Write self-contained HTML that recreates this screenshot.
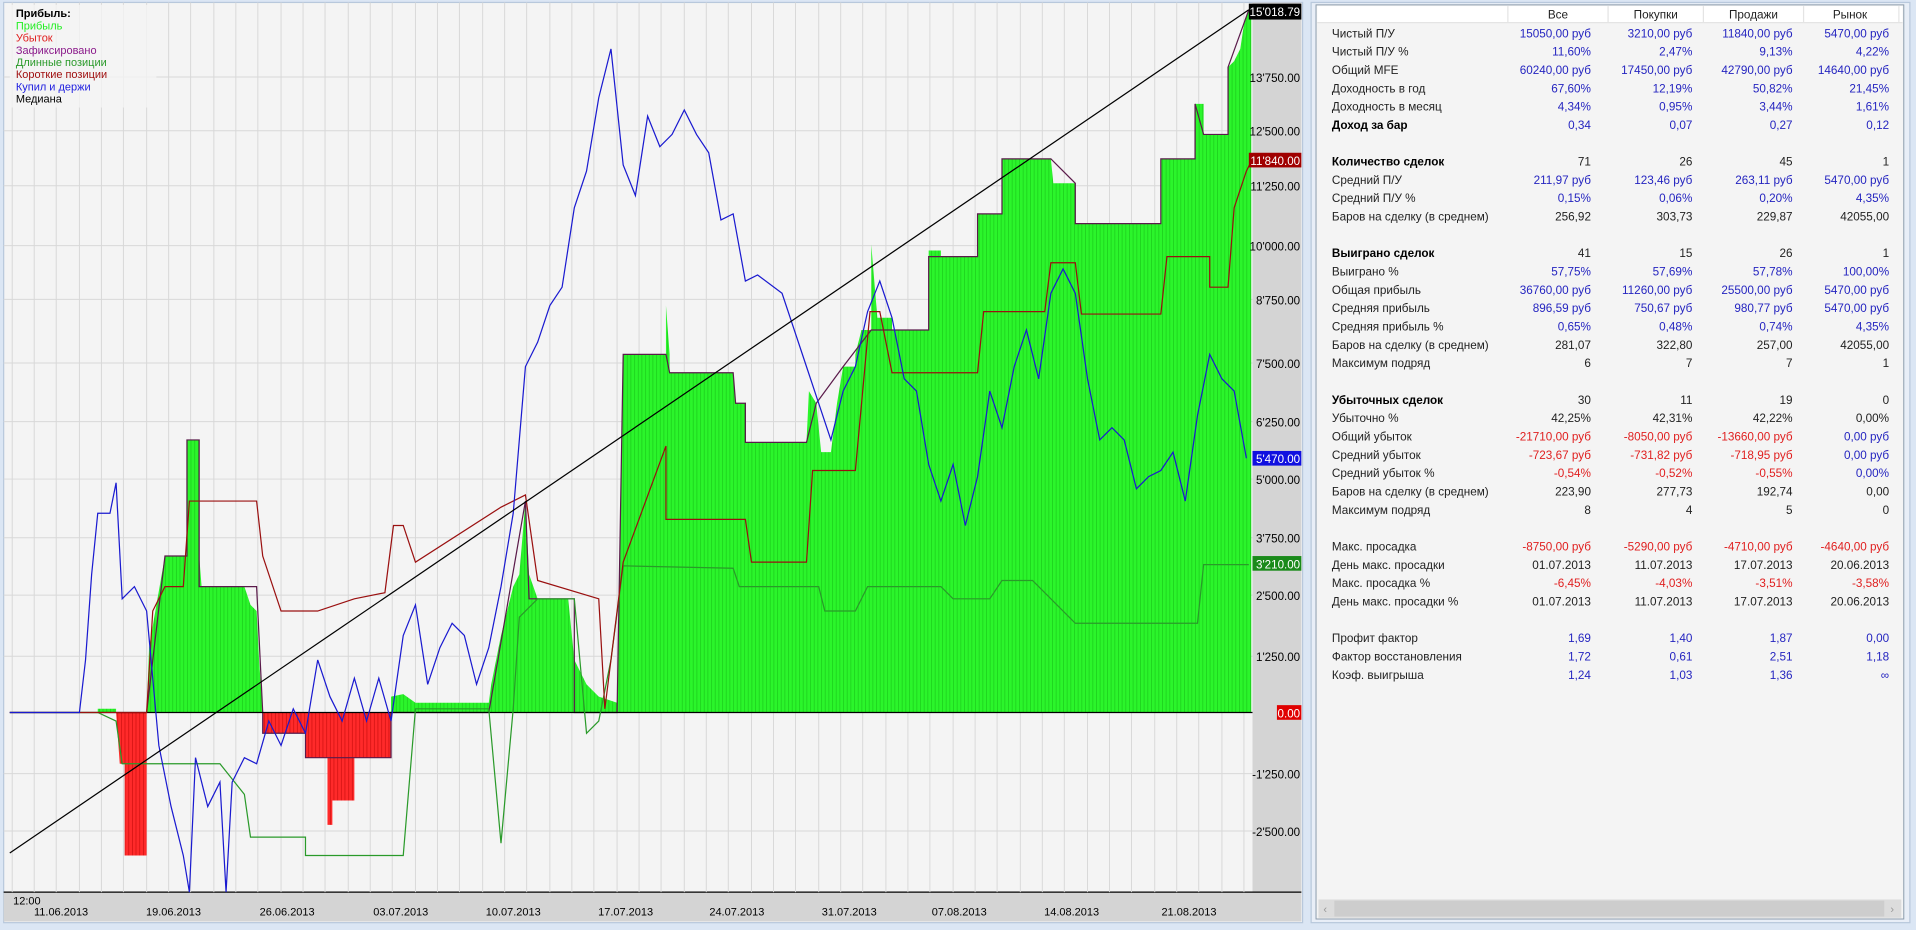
<!DOCTYPE html>
<html><head><meta charset="utf-8"><style>
html,body{margin:0;padding:0;background:#dbe6f4;}
svg{display:block}
text{font-family:"Liberation Sans","DejaVu Sans",sans-serif;}
</style></head><body>
<svg width="1916" height="930" viewBox="0 0 1568 761" preserveAspectRatio="none" xmlns="http://www.w3.org/2000/svg">
<defs>
<pattern id="gs" width="3" height="10" patternUnits="userSpaceOnUse"><rect width="3" height="10" fill="#2bf52b"/><rect width="0.6" height="10" fill="#1ccc1c"/></pattern>
<pattern id="rs" width="3" height="10" patternUnits="userSpaceOnUse"><rect width="3" height="10" fill="#ff2a2a"/><rect width="0.6" height="10" fill="#d01010"/></pattern>
</defs>
<rect width="1568" height="761" fill="#dbe6f4"/>
<rect x="3" y="2" width="1063" height="753" fill="#f4f4f4" stroke="#b8c8dc"/>
<rect x="1025" y="2" width="40" height="728" fill="#d4d4d4"/>
<rect x="3" y="730" width="1062" height="24" fill="#d4d4d4"/>
<line x1="3" y1="730" x2="1065" y2="730" stroke="#000" stroke-width="1"/>
<g stroke="#d8d8d8" stroke-width="0.8">
<line x1="10" y1="2" x2="10" y2="730"/><line x1="28" y1="2" x2="28" y2="730"/><line x1="46" y1="2" x2="46" y2="730"/><line x1="65" y1="2" x2="65" y2="730"/><line x1="83" y1="2" x2="83" y2="730"/><line x1="101" y1="2" x2="101" y2="730"/><line x1="120" y1="2" x2="120" y2="730"/><line x1="138" y1="2" x2="138" y2="730"/><line x1="156" y1="2" x2="156" y2="730"/><line x1="175" y1="2" x2="175" y2="730"/><line x1="193" y1="2" x2="193" y2="730"/><line x1="211" y1="2" x2="211" y2="730"/><line x1="230" y1="2" x2="230" y2="730"/><line x1="248" y1="2" x2="248" y2="730"/><line x1="266" y1="2" x2="266" y2="730"/><line x1="285" y1="2" x2="285" y2="730"/><line x1="303" y1="2" x2="303" y2="730"/><line x1="321" y1="2" x2="321" y2="730"/><line x1="340" y1="2" x2="340" y2="730"/><line x1="358" y1="2" x2="358" y2="730"/><line x1="376" y1="2" x2="376" y2="730"/><line x1="395" y1="2" x2="395" y2="730"/><line x1="413" y1="2" x2="413" y2="730"/><line x1="431" y1="2" x2="431" y2="730"/><line x1="450" y1="2" x2="450" y2="730"/><line x1="468" y1="2" x2="468" y2="730"/><line x1="486" y1="2" x2="486" y2="730"/><line x1="505" y1="2" x2="505" y2="730"/><line x1="523" y1="2" x2="523" y2="730"/><line x1="541" y1="2" x2="541" y2="730"/><line x1="560" y1="2" x2="560" y2="730"/><line x1="578" y1="2" x2="578" y2="730"/><line x1="596" y1="2" x2="596" y2="730"/><line x1="615" y1="2" x2="615" y2="730"/><line x1="633" y1="2" x2="633" y2="730"/><line x1="651" y1="2" x2="651" y2="730"/><line x1="670" y1="2" x2="670" y2="730"/><line x1="688" y1="2" x2="688" y2="730"/><line x1="706" y1="2" x2="706" y2="730"/><line x1="725" y1="2" x2="725" y2="730"/><line x1="743" y1="2" x2="743" y2="730"/><line x1="761" y1="2" x2="761" y2="730"/><line x1="780" y1="2" x2="780" y2="730"/><line x1="798" y1="2" x2="798" y2="730"/><line x1="816" y1="2" x2="816" y2="730"/><line x1="835" y1="2" x2="835" y2="730"/><line x1="853" y1="2" x2="853" y2="730"/><line x1="871" y1="2" x2="871" y2="730"/><line x1="890" y1="2" x2="890" y2="730"/><line x1="908" y1="2" x2="908" y2="730"/><line x1="926" y1="2" x2="926" y2="730"/><line x1="945" y1="2" x2="945" y2="730"/><line x1="963" y1="2" x2="963" y2="730"/><line x1="981" y1="2" x2="981" y2="730"/><line x1="1000" y1="2" x2="1000" y2="730"/><line x1="1018" y1="2" x2="1018" y2="730"/>
<line x1="3" y1="63" x2="1025" y2="63"/><line x1="3" y1="107" x2="1025" y2="107"/><line x1="3" y1="152" x2="1025" y2="152"/><line x1="3" y1="201" x2="1025" y2="201"/><line x1="3" y1="245" x2="1025" y2="245"/><line x1="3" y1="297" x2="1025" y2="297"/><line x1="3" y1="345" x2="1025" y2="345"/><line x1="3" y1="392" x2="1025" y2="392"/><line x1="3" y1="440" x2="1025" y2="440"/><line x1="3" y1="487" x2="1025" y2="487"/><line x1="3" y1="537" x2="1025" y2="537"/><line x1="3" y1="633" x2="1025" y2="633"/><line x1="3" y1="680" x2="1025" y2="680"/>
</g>
<polygon fill="url(#gs)" points="80,583 80,580 95,580 95,583 120,583 122,530 128,495 135,455 153,455 153,360 163,360 163,455 165,480 200,480 205,495 210,500 212,540 215,583 320,583 320,570 330,568 340,575 400,575 402,560 410,520 420,480 425,470 430,410 433,470 440,490 465,490 470,540 480,560 490,570 505,575 510,290 545,290 545,250 548,290 548,305 600,305 602,330 610,330 610,362 660,362 662,320 668,330 672,370 680,370 685,330 690,300 700,300 700,290 705,270 713,270 713,200 718,260 730,260 730,270 760,270 760,205 770,205 770,210 800,210 800,175 820,175 820,130 860,130 862,150 880,150 880,183 950,183 950,130 978,130 978,85 985,85 985,110 1005,110 1005,55 1010,50 1015,40 1018,20 1022,8 1024,8 1024,583"/>
<polygon fill="url(#rs)" points="95,583 98,625 102,625 102,700 120,700 120,583"/>
<polygon fill="url(#rs)" points="215,583 215,600 250,600 250,620 268,620 268,675 272,675 272,655 290,655 290,620 320,620 320,583"/>
<polyline fill="none" stroke="#5a1a4a" stroke-width="1" points="120,583 135,455 153,455 153,360 163,360 163,480 210,480 215,583 215,600 250,600 250,620 290,620 320,620 320,583 400,583 430,410 433,490 470,490 470,583 505,583 510,290 545,290 548,305 600,305 602,330 610,330 610,362 660,362 668,330 690,300 713,270 730,270 760,270 760,210 800,210 800,175 820,175 820,130 860,130 880,150 880,183 950,183 950,130 978,130 978,85 985,110 1005,110 1005,55 1022,8"/>
<line x1="8" y1="583" x2="1025" y2="583" stroke="#000" stroke-width="1"/>
<polyline fill="none" stroke="#2a9a2a" stroke-width="1" points="8,583 80,583 95,590 100,625 180,625 200,650 205,685 250,685 250,700 330,700 340,580 400,580 410,690 420,580 425,505 440,490 470,490 480,600 490,590 500,540 510,463 600,465 605,480 670,480 675,500 700,500 710,480 770,480 780,490 810,490 820,475 845,475 880,510 980,510 985,462 1022,462"/>
<polyline fill="none" stroke="#9a1010" stroke-width="1" points="8,583 120,583 125,500 130,490 135,480 150,480 155,410 210,410 215,455 230,500 260,500 290,490 315,485 322,430 330,430 340,460 410,415 420,410 430,405 440,475 490,490 495,580 500,540 510,460 545,365 545,425 610,425 615,460 660,460 665,385 700,385 712,255 720,255 730,305 800,305 805,255 855,255 860,215 880,215 885,257 950,257 955,210 990,210 990,235 1005,235 1010,170 1020,140 1025,130"/>
<polyline fill="none" stroke="#1a1ad0" stroke-width="1" points="8,583 65,583 70,540 75,470 80,420 90,420 95,395 100,490 110,480 120,500 130,610 140,660 150,700 155,730 160,620 170,660 180,640 185,730 190,640 200,620 210,625 220,590 230,610 240,580 250,600 260,540 270,570 280,590 290,555 300,590 310,555 320,590 330,520 340,495 350,560 360,530 370,510 380,520 390,560 400,530 410,480 420,420 430,300 440,280 450,250 460,235 470,170 480,140 490,80 500,40 510,135 520,160 530,95 540,120 550,110 560,90 570,110 580,125 590,180 600,175 610,230 620,225 640,240 650,270 660,300 670,330 680,360 690,320 700,300 710,255 720,230 730,260 740,310 750,320 760,380 770,410 780,380 790,430 800,390 810,320 820,350 830,300 840,270 850,310 860,240 870,220 880,240 890,310 900,360 910,350 920,360 930,400 940,390 950,385 960,370 970,410 980,340 990,290 1000,310 1010,320 1020,375"/>
<line x1="8" y1="698" x2="1022" y2="8" stroke="#000" stroke-width="1"/>
<rect x="8" y="4" width="120" height="84" fill="#f4f4f4" opacity="0.8"/>
<g font-size="9">
<text x="13" y="14" font-weight="bold" fill="#000">Прибыль:</text>
<text x="13" y="24" fill="#22ee22">Прибыль</text>
<text x="13" y="34" fill="#e02020">Убыток</text>
<text x="13" y="44" fill="#8b1a8b">Зафиксировано</text>
<text x="13" y="54" fill="#2a9a2a">Длинные позиции</text>
<text x="13" y="64" fill="#a01010">Короткие позиции</text>
<text x="13" y="74" fill="#2020e0">Купил и держи</text>
<text x="13" y="84" fill="#000">Медиана</text>
</g>
<g font-size="9.5" fill="#000" text-anchor="end">
<rect x="1022" y="3" width="43" height="13" fill="#000"/><text x="1064" y="13" fill="#fff">15'018.79</text>
<text x="1064" y="67">13'750.00</text>
<text x="1064" y="111">12'500.00</text>
<rect x="1022" y="125" width="43" height="12" fill="#a00000"/><text x="1064" y="135" fill="#fff">11'840.00</text>
<text x="1064" y="156">11'250.00</text>
<text x="1064" y="205">10'000.00</text>
<text x="1064" y="249">8'750.00</text>
<text x="1064" y="301">7'500.00</text>
<text x="1064" y="349">6'250.00</text>
<rect x="1025" y="369" width="40" height="12" fill="#1010e0"/><text x="1064" y="379" fill="#fff">5'470.00</text>
<text x="1064" y="396">5'000.00</text>
<text x="1064" y="444">3'750.00</text>
<rect x="1025" y="455" width="40" height="12" fill="#1a8a1a"/><text x="1064" y="465" fill="#fff">3'210.00</text>
<text x="1064" y="491">2'500.00</text>
<text x="1064" y="541">1'250.00</text>
<rect x="1045" y="577" width="20" height="12" fill="#e00000"/><text x="1064" y="587" fill="#fff">0.00</text>
<text x="1064" y="637">-1'250.00</text>
<text x="1064" y="684">-2'500.00</text>
</g>
<g font-size="9" fill="#000" text-anchor="middle">
<text x="22" y="740">12:00</text>
<text x="50" y="749">11.06.2013</text><text x="142" y="749">19.06.2013</text><text x="235" y="749">26.06.2013</text><text x="328" y="749">03.07.2013</text><text x="420" y="749">10.07.2013</text><text x="512" y="749">17.07.2013</text><text x="603" y="749">24.07.2013</text><text x="695" y="749">31.07.2013</text><text x="785" y="749">07.08.2013</text><text x="877" y="749">14.08.2013</text><text x="973" y="749">21.08.2013</text>
</g>
<rect x="1073" y="2" width="490" height="753" fill="#e8eef7" stroke="#b8c8dc"/>
<rect x="1077" y="4" width="481" height="748" fill="#f4f4f4" stroke="#8a9aaa" stroke-width="0.8"/>
<rect x="1078" y="5" width="479" height="13" fill="#fff"/>
<line x1="1078" y1="18.5" x2="1557" y2="18.5" stroke="#e4e4e4"/>
<g stroke="#e4e4e4"><line x1="1234" y1="5" x2="1234" y2="18"/><line x1="1316" y1="5" x2="1316" y2="18"/><line x1="1394" y1="5" x2="1394" y2="18"/><line x1="1476" y1="5" x2="1476" y2="18"/><line x1="1554" y1="5" x2="1554" y2="18"/></g>
<rect x="1079" y="736" width="477" height="15" fill="#dcdcdc"/>
<rect x="1092" y="737" width="450" height="13" fill="#cdcdcd"/>
<text x="1083" y="747" font-size="9" fill="#999">‹</text><text x="1547" y="747" font-size="9" fill="#999">›</text>
<g font-size="9.6" fill="#222">
<g text-anchor="middle"><text x="1275" y="15">Все</text><text x="1355" y="15">Покупки</text><text x="1435" y="15">Продажи</text><text x="1514" y="15">Рынок</text></g>
<g>
<text x="1090" y="30.5">Чистый П/У</text><text x="1090" y="45.5">Чистый П/У %</text><text x="1090" y="60.5">Общий MFE</text><text x="1090" y="75.5">Доходность в год</text><text x="1090" y="90.5">Доходность в месяц</text><text x="1090" y="105.5" font-weight="bold" fill="#000">Доход за бар</text>
<text x="1090" y="135.5" font-weight="bold" fill="#000">Количество сделок</text><text x="1090" y="150.5">Средний П/У</text><text x="1090" y="165.5">Средний П/У %</text><text x="1090" y="180.5">Баров на сделку (в среднем)</text>
<text x="1090" y="210.5" font-weight="bold" fill="#000">Выиграно сделок</text><text x="1090" y="225.5">Выиграно %</text><text x="1090" y="240.5">Общая прибыль</text><text x="1090" y="255.5">Средняя прибыль</text><text x="1090" y="270.5">Средняя прибыль %</text><text x="1090" y="285.5">Баров на сделку (в среднем)</text><text x="1090" y="300.5">Максимум подряд</text>
<text x="1090" y="330.5" font-weight="bold" fill="#000">Убыточных сделок</text><text x="1090" y="345.5">Убыточно %</text><text x="1090" y="360.5">Общий убыток</text><text x="1090" y="375.5">Средний убыток</text><text x="1090" y="390.5">Средний убыток %</text><text x="1090" y="405.5">Баров на сделку (в среднем)</text><text x="1090" y="420.5">Максимум подряд</text>
<text x="1090" y="450.5">Макс. просадка</text><text x="1090" y="465.5">День макс. просадки</text><text x="1090" y="480.5">Макс. просадка %</text><text x="1090" y="495.5">День макс. просадки %</text>
<text x="1090" y="525.5">Профит фактор</text><text x="1090" y="540.5">Фактор восстановления</text><text x="1090" y="555.5">Коэф. выигрыша</text>
</g>
<g text-anchor="end" fill="#2525c0">
<text x="1302" y="30.5">15050,00 руб</text><text x="1385" y="30.5">3210,00 руб</text><text x="1467" y="30.5">11840,00 руб</text><text x="1546" y="30.5">5470,00 руб</text>
<text x="1302" y="45.5">11,60%</text><text x="1385" y="45.5">2,47%</text><text x="1467" y="45.5">9,13%</text><text x="1546" y="45.5">4,22%</text>
<text x="1302" y="60.5">60240,00 руб</text><text x="1385" y="60.5">17450,00 руб</text><text x="1467" y="60.5">42790,00 руб</text><text x="1546" y="60.5">14640,00 руб</text>
<text x="1302" y="75.5">67,60%</text><text x="1385" y="75.5">12,19%</text><text x="1467" y="75.5">50,82%</text><text x="1546" y="75.5">21,45%</text>
<text x="1302" y="90.5">4,34%</text><text x="1385" y="90.5">0,95%</text><text x="1467" y="90.5">3,44%</text><text x="1546" y="90.5">1,61%</text>
<text x="1302" y="105.5">0,34</text><text x="1385" y="105.5">0,07</text><text x="1467" y="105.5">0,27</text><text x="1546" y="105.5">0,12</text>
<text x="1302" y="150.5">211,97 руб</text><text x="1385" y="150.5">123,46 руб</text><text x="1467" y="150.5">263,11 руб</text><text x="1546" y="150.5">5470,00 руб</text>
<text x="1302" y="165.5">0,15%</text><text x="1385" y="165.5">0,06%</text><text x="1467" y="165.5">0,20%</text><text x="1546" y="165.5">4,35%</text>
<text x="1302" y="225.5">57,75%</text><text x="1385" y="225.5">57,69%</text><text x="1467" y="225.5">57,78%</text><text x="1546" y="225.5">100,00%</text>
<text x="1302" y="240.5">36760,00 руб</text><text x="1385" y="240.5">11260,00 руб</text><text x="1467" y="240.5">25500,00 руб</text><text x="1546" y="240.5">5470,00 руб</text>
<text x="1302" y="255.5">896,59 руб</text><text x="1385" y="255.5">750,67 руб</text><text x="1467" y="255.5">980,77 руб</text><text x="1546" y="255.5">5470,00 руб</text>
<text x="1302" y="270.5">0,65%</text><text x="1385" y="270.5">0,48%</text><text x="1467" y="270.5">0,74%</text><text x="1546" y="270.5">4,35%</text>
<text x="1546" y="360.5">0,00 руб</text><text x="1546" y="375.5">0,00 руб</text><text x="1546" y="390.5">0,00%</text>
<text x="1302" y="525.5">1,69</text><text x="1385" y="525.5">1,40</text><text x="1467" y="525.5">1,87</text><text x="1546" y="525.5">0,00</text>
<text x="1302" y="540.5">1,72</text><text x="1385" y="540.5">0,61</text><text x="1467" y="540.5">2,51</text><text x="1546" y="540.5">1,18</text>
<text x="1302" y="555.5">1,24</text><text x="1385" y="555.5">1,03</text><text x="1467" y="555.5">1,36</text><text x="1546" y="555.5">∞</text>
</g>
<g text-anchor="end" fill="#222">
<text x="1302" y="135.5">71</text><text x="1385" y="135.5">26</text><text x="1467" y="135.5">45</text><text x="1546" y="135.5">1</text>
<text x="1302" y="180.5">256,92</text><text x="1385" y="180.5">303,73</text><text x="1467" y="180.5">229,87</text><text x="1546" y="180.5">42055,00</text>
<text x="1302" y="210.5">41</text><text x="1385" y="210.5">15</text><text x="1467" y="210.5">26</text><text x="1546" y="210.5">1</text>
<text x="1302" y="285.5">281,07</text><text x="1385" y="285.5">322,80</text><text x="1467" y="285.5">257,00</text><text x="1546" y="285.5">42055,00</text>
<text x="1302" y="300.5">6</text><text x="1385" y="300.5">7</text><text x="1467" y="300.5">7</text><text x="1546" y="300.5">1</text>
<text x="1302" y="330.5">30</text><text x="1385" y="330.5">11</text><text x="1467" y="330.5">19</text><text x="1546" y="330.5">0</text>
<text x="1302" y="345.5">42,25%</text><text x="1385" y="345.5">42,31%</text><text x="1467" y="345.5">42,22%</text><text x="1546" y="345.5">0,00%</text>
<text x="1302" y="405.5">223,90</text><text x="1385" y="405.5">277,73</text><text x="1467" y="405.5">192,74</text><text x="1546" y="405.5">0,00</text>
<text x="1302" y="420.5">8</text><text x="1385" y="420.5">4</text><text x="1467" y="420.5">5</text><text x="1546" y="420.5">0</text>
<text x="1302" y="465.5">01.07.2013</text><text x="1385" y="465.5">11.07.2013</text><text x="1467" y="465.5">17.07.2013</text><text x="1546" y="465.5">20.06.2013</text>
<text x="1302" y="495.5">01.07.2013</text><text x="1385" y="495.5">11.07.2013</text><text x="1467" y="495.5">17.07.2013</text><text x="1546" y="495.5">20.06.2013</text>
</g>
<g text-anchor="end" fill="#e02020">
<text x="1302" y="360.5">-21710,00 руб</text><text x="1385" y="360.5">-8050,00 руб</text><text x="1467" y="360.5">-13660,00 руб</text>
<text x="1302" y="375.5">-723,67 руб</text><text x="1385" y="375.5">-731,82 руб</text><text x="1467" y="375.5">-718,95 руб</text>
<text x="1302" y="390.5">-0,54%</text><text x="1385" y="390.5">-0,52%</text><text x="1467" y="390.5">-0,55%</text>
<text x="1302" y="450.5">-8750,00 руб</text><text x="1385" y="450.5">-5290,00 руб</text><text x="1467" y="450.5">-4710,00 руб</text><text x="1546" y="450.5">-4640,00 руб</text>
<text x="1302" y="480.5">-6,45%</text><text x="1385" y="480.5">-4,03%</text><text x="1467" y="480.5">-3,51%</text><text x="1546" y="480.5">-3,58%</text>
</g>
</g>
</svg>
</body></html>
